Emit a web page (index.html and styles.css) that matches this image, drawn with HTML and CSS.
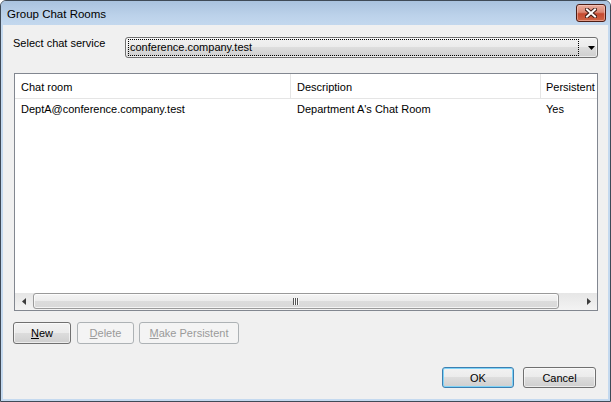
FILE: index.html
```html
<!DOCTYPE html>
<html>
<head>
<meta charset="utf-8">
<link rel="stylesheet" href="styles.css">
</head>
<body>
<div class="window">
  <div class="titlebar">
    <span class="title">Group Chat Rooms</span>
    <div class="close">
      <svg width="12" height="10" viewBox="0 0 12 10">
        <path d="M2 1.5 L10 8.5 M10 1.5 L2 8.5" stroke="#3d1a14" stroke-width="4" stroke-linecap="square"/>
        <path d="M2 1.5 L10 8.5 M10 1.5 L2 8.5" stroke="#ffffff" stroke-width="2" stroke-linecap="square"/>
      </svg>
    </div>
  </div>
  <div class="client">
    <div class="service-row">
      <span class="service-label">Select chat service</span>
      <div class="combo">
        <span class="combo-focus">conference.company.test</span>
        <svg class="combo-arrow" width="7" height="4" viewBox="0 0 7 4"><path d="M0 0H7L3.5 4Z" fill="#000"/></svg>
      </div>
    </div>
    <div class="list">
      <div class="list-header">
        <div class="col c1">Chat room</div>
        <div class="col c2">Description</div>
        <div class="col c3">Persistent</div>
      </div>
      <div class="list-body">
        <div class="list-row">
          <div class="cell c1">DeptA@conference.company.test</div>
          <div class="cell c2">Department A's Chat Room</div>
          <div class="cell c3">Yes</div>
        </div>
      </div>
      <div class="hscroll">
        <div class="sb-btn"><svg width="4" height="7" viewBox="0 0 4 7"><path d="M4 0V7L0 3.5Z" fill="#3c3c3c"/></svg></div>
        <div class="sb-track">
          <div class="sb-thumb">
            <svg width="7" height="7" viewBox="0 0 7 7">
              <path d="M0.5 0V7M2.5 0V7M4.5 0V7" stroke="#555" stroke-width="1"/>
              <path d="M1.5 0V7M3.5 0V7M5.5 0V7" stroke="#fafafa" stroke-width="1"/>
            </svg>
          </div>
        </div>
        <div class="sb-btn"><svg width="4" height="7" viewBox="0 0 4 7"><path d="M0 0V7L4 3.5Z" fill="#3c3c3c"/></svg></div>
      </div>
    </div>
    <div class="actions">
      <button class="btn btn-new"><u>N</u>ew</button>
      <button class="btn btn-delete" disabled><u>D</u>elete</button>
      <button class="btn btn-persist" disabled><u>M</u>ake Persistent</button>
    </div>
    <div class="footer">
      <button class="btn btn-ok btn-default">OK</button>
      <button class="btn btn-cancel">Cancel</button>
    </div>
  </div>
</div>
</body>
</html>
```

FILE: styles.css
```css
html, body {
  margin: 0;
  padding: 0;
}
body {
  width: 611px;
  height: 402px;
  overflow: hidden;
  font-family: "Liberation Sans", Arial, sans-serif;
  font-size: 11px;
  color: #000;
  background: #ffffff;
}
.window {
  box-sizing: border-box;
  width: 611px;
  height: 402px;
  border: 1px solid #3f4a57;
  border-radius: 6px 6px 0 0;
  background: #c4d9ef;
  display: flex;
  flex-direction: column;
}
.titlebar {
  flex: none;
  height: 24px;
  display: flex;
  align-items: flex-start;
  background: linear-gradient(#a9c2de, #bcd2ea 60%, #c3d8ee);
  border-radius: 5px 5px 0 0;
  padding-left: 6px;
}
.title {
  font-size: 11.5px;
  line-height: 14px;
  margin-top: 6px;
  color: #000;
  flex: 1;
}
.close {
  box-sizing: border-box;
  width: 30px;
  height: 18px;
  margin-top: 3px;
  margin-right: 4px;
  border: 1px solid #4e1d15;
  border-radius: 3px;
  background: linear-gradient(#e9ad9e 0%, #dc8874 45%, #c54a30 55%, #cf6647 100%);
  box-shadow: inset 0 0 0 1px rgba(255, 220, 210, 0.45);
  display: flex;
  align-items: center;
  justify-content: center;
}
.client {
  flex: 1;
  margin: 0 2px 2px;
  background: #f0f0f0;
  padding: 12px 10px 0 10px;
  display: flex;
  flex-direction: column;
}
.service-row {
  display: grid;
  grid-template-columns: 112px 1fr;
  align-items: start;
}
.service-label {
  line-height: 12px;
  margin-top: 0;
}
.combo {
  box-sizing: border-box;
  height: 21px;
  border: 1px solid #707070;
  border-radius: 3px;
  background: linear-gradient(#f2f2f2 0%, #ebebeb 50%, #dddddd 50%, #cfcfcf 100%);
  box-shadow: inset 0 0 0 1px rgba(255, 255, 255, 0.6);
  display: flex;
  align-items: center;
  padding: 1px 0 1px 2px;
}
.combo-focus {
  flex: 1;
  box-sizing: border-box;
  height: 17px;
  border: 1px dotted #000;
  line-height: 15px;
  padding-left: 1px;
}
.combo-arrow {
  margin-left: 9px;
  margin-right: 2px;
  flex: none;
}
.list {
  box-sizing: border-box;
  margin-top: 15px;
  margin-left: 1px;
  height: 238px;
  border: 1px solid #828790;
  background: #fff;
  display: flex;
  flex-direction: column;
  overflow: hidden;
}
.list-header {
  flex: none;
  height: 24px;
  border-bottom: 1px solid #e5e5e5;
  display: flex;
}
.col {
  box-sizing: border-box;
  line-height: 26px;
  white-space: nowrap;
  overflow: hidden;
}
.c1 {
  width: 276px;
  padding-left: 6px;
  flex: none;
}
.c2 {
  width: 250px;
  padding-left: 6px;
  flex: none;
}
.c3 {
  flex: 1;
  padding-left: 5px;
  white-space: nowrap;
  overflow: hidden;
}
.list-header .c1,
.list-header .c2 {
  border-right: 1px solid #e5e5e5;
}
.list-body {
  flex: 1;
}
.list-row {
  display: flex;
  height: 19px;
}
.cell {
  box-sizing: border-box;
  line-height: 20px;
  white-space: nowrap;
  overflow: hidden;
}
.hscroll {
  flex: none;
  height: 17px;
  display: flex;
  background: linear-gradient(#e6e6e6, #f3f3f3);
}
.sb-btn {
  width: 17px;
  flex: none;
  display: flex;
  align-items: center;
  justify-content: center;
}
.sb-track {
  flex: 1;
  display: flex;
}
.sb-thumb {
  box-sizing: border-box;
  width: 526px;
  height: 16px;
  margin-left: 1px;
  border: 1px solid #9a9a9a;
  border-radius: 3px;
  background: linear-gradient(#f5f5f5 0%, #ececec 50%, #dcdcdc 50%, #d9d9d9 100%);
  box-shadow: inset 0 0 0 1px rgba(255, 255, 255, 0.7);
  display: flex;
  align-items: center;
  justify-content: center;
}
.actions {
  margin-top: 11px;
  display: flex;
  height: 22px;
}
.btn {
  box-sizing: border-box;
  height: 22px;
  padding: 0;
  margin: 0;
  border: 1px solid #707070;
  border-radius: 3px;
  background: linear-gradient(#f2f2f2 0%, #ebebeb 50%, #dddddd 50%, #cfcfcf 100%);
  box-shadow: inset 0 0 0 1px rgba(255, 255, 255, 0.6);
  font-family: "Liberation Sans", Arial, sans-serif;
  font-size: 11px;
  color: #000;
}
.btn u {
  text-decoration: underline;
}
.btn:disabled {
  border-color: #adb2b5;
  background: #f4f4f4;
  box-shadow: none;
  color: #9a9a9a;
}
.btn-new {
  width: 58px;
}
.btn-delete {
  width: 57px;
  margin-left: 6px;
}
.btn-persist {
  width: 100px;
  margin-left: 5px;
}
.footer {
  margin-top: 23px;
  display: flex;
  justify-content: flex-end;
  padding-right: 2px;
}
.footer .btn {
  height: 21px;
}
.btn-ok {
  width: 72px;
}
.btn-default {
  border-color: #3c7fb1;
  box-shadow: inset 0 0 0 1px #7fd3f7;
}
.btn-cancel {
  width: 73px;
  margin-left: 9px;
}
```
